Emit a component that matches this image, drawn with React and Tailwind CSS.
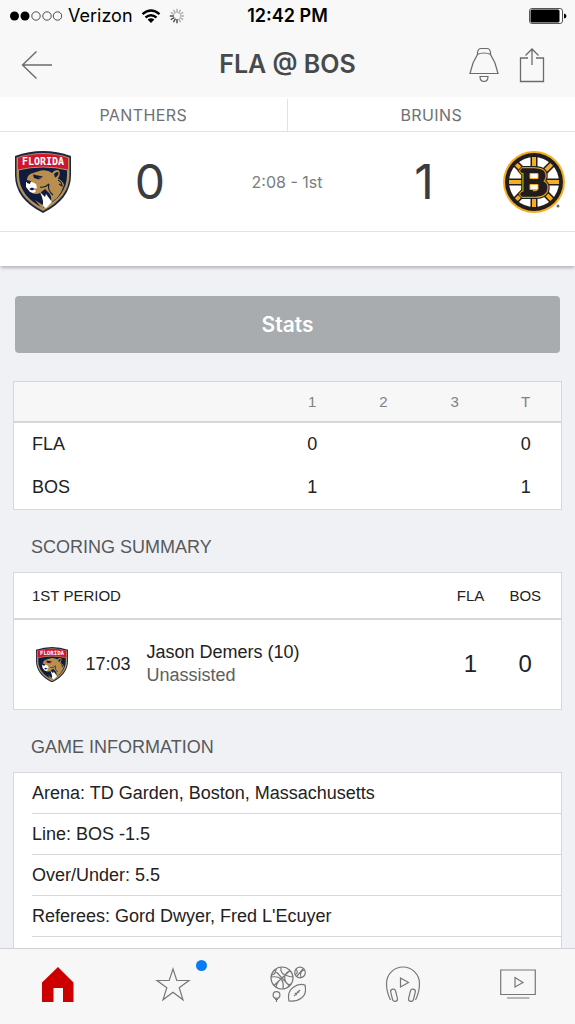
import React, { useState } from "react";

const LINE_SCORE = [
  { team: "FLA", periods: ["0", "", ""], total: "0" },
  { team: "BOS", periods: ["1", "", ""], total: "1" },
];

const GAME_INFO = [
  "Arena: TD Garden, Boston, Massachusetts",
  "Line: BOS -1.5",
  "Over/Under: 5.5",
  "Referees: Gord Dwyer, Fred L'Ecuyer",
];

const PanthersLogo = ({ className }) => (
  <svg viewBox="0 0 56 62" className={className} role="img" aria-label="Florida Panthers">
    <path d="M0 5Q14 0 28 0T56 5V24Q56 48 28 62Q0 48 0 24Z" fill="#1b2440" />
    <path d="M1.500 6.500Q15 2 28 2T54.500 6.500V24Q54.500 46 28 60Q1.500 46 1.500 24Z" fill="#b1935b" />
    <path d="M4 8Q16 4 28 4T52 8V24Q52 45 28 57Q4 45 4 24Z" fill="#101c3d" />
    <path d="M3 7Q15 3 28 3T53 7V19Q41 16 28 16T3 19Z" fill="#d0162f" />
    <path d="M3 19Q15 16 28 16T53 19" fill="none" stroke="#b1935b" strokeWidth="1.200" />
    <text x="28" y="13.500" textAnchor="middle" fontSize="10" fontWeight="700" fill="#fff" fontFamily="DejaVu Sans Mono, monospace">
      FLORIDA
    </text>
    {/* head and neck */}
    <path d="M12 28Q13 23 18 22L26 19.500Q33 18.500 37 22Q40 18 44 19.500Q46 23 43 27.500Q48 30 49 34Q47 41 42 47L36 51.500Q37 45 34 42L30 38L25 42Q21 44 17 42L12 37Z" fill="#b98f4d" />
    <path d="M39 23Q42 20 43.500 21.500Q43.500 25 40 26.500" fill="#101c3d" />
    <path d="M43 29Q47 31 47 35L44 33M25 36Q30 37 34 33Q32 39 38 44" fill="none" stroke="#101c3d" strokeWidth="1.100" />
    <path d="M18 23.500L28 25.500L24 28.500L19 27Z" fill="#101c3d" />
    <path d="M23 26.500L27 26L25 28Z" fill="#d0162f" />
    <path d="M11 31L17 31L21 33L22 37L19 38L21 40L19 42L15 41L11 36Z" fill="#fff" />
    <path d="M11 29L16 30L15 33L12 32Z" fill="#101c3d" />
    <path d="M14 38L17 36.500L20 38L17 39.500Z" fill="#101c3d" />
    <path d="M25 41L30 46L31 43L37 51L31 57L27 55Q30 52 25 41Z" fill="#fff" />
    <path d="M20 49L29 55L28 58.500Z" fill="#b98f4d" />
  </svg>
);

const BruinsLogo = ({ className }) => (
  <svg viewBox="0 0 62 62" className={className} role="img" aria-label="Boston Bruins">
    <circle cx="31" cy="31" r="31" fill="#f5ad22" />
    <circle cx="31" cy="31" r="29" fill="#211d1e" />
    <circle cx="31" cy="31" r="25" fill="#fff" />
    {[0, 45, 90, 135].map((angle) => (
      <g key={angle} transform={`rotate(${angle} 31 31)`}>
        <path d="M27.500 5.500H34.500V56.500H27.500Z" fill="#211d1e" />
        <path d="M29 6H33V56H29Z" fill="#f5ad22" />
      </g>
    ))}
    <g fontFamily="Liberation Serif, serif" fontSize="38" fontWeight="700" textAnchor="middle" strokeLinejoin="bevel">
      <text x="31" y="43.500" fill="#211d1e" stroke="#211d1e" strokeWidth="8">B</text>
      <text x="31" y="43.500" fill="#211d1e" stroke="#f5ad22" strokeWidth="5.500" aria-hidden="true">B</text>
      <text x="31" y="43.500" fill="#211d1e" stroke="#211d1e" strokeWidth="3.500" aria-hidden="true">B</text>
    </g>
    <path d="M27 22.500h8v5h-8zM27 33.500h8v5h-8z" fill="#fff" stroke="#f5ad22" strokeWidth="1" />
    <circle cx="55" cy="55" r="1.500" fill="#666" />
  </svg>
);

const StatusBar = () => (
  <div className="grid grid-cols-[1fr_auto_1fr] items-center h-8 pl-2 pr-2 text-lg text-black">
    <div className="flex items-center">
      <svg width="56" height="12" viewBox="0 0 56 12" aria-hidden="true">
        <circle cx="6.500" cy="6" r="4.500" />
        <circle cx="17" cy="6" r="4.500" />
        <g fill="none" stroke="#222" strokeWidth="0.800">
          <circle cx="28" cy="6" r="4.200" />
          <circle cx="39" cy="6" r="4.200" />
          <circle cx="49.500" cy="6" r="4.200" />
        </g>
      </svg>
      <span className="ml-1">Verizon</span>
      <svg width="20" height="15" viewBox="0 0 20 15" className="ml-2" fill="none" stroke="#000" strokeWidth="2.400" aria-hidden="true">
        <path d="M1.500 5.200Q10-2 18.500 5.200M4.500 8.500Q10 4 15.500 8.500" />
        <path d="M10 14L6.600 10.600Q10 8 13.400 10.600Z" fill="#000" stroke="none" />
      </svg>
      <svg width="16" height="16" viewBox="0 0 16 16" className="ml-2" strokeWidth="1.400" aria-hidden="true">
        {[0, 30, 60, 90, 120, 150, 180, 210, 240, 270, 300, 330].map((angle) => (
          <path
            key={angle}
            d="M8 0.800V5"
            stroke={angle >= 180 && angle < 300 ? "#444" : "#aaa"}
            transform={`rotate(${angle} 8 8)`}
          />
        ))}
      </svg>
    </div>
    <span className="font-semibold">12:42 PM</span>
    <svg width="38" height="16" viewBox="0 0 38 16" className="justify-self-end" aria-hidden="true">
      <rect x="0.500" y="0.500" width="33" height="15" rx="2.500" fill="#fff" stroke="#555" />
      <rect x="1.500" y="1.500" width="29" height="13" rx="1.500" />
      <path d="M35 5.500Q37.500 6 37.500 8T35 10.500Z" />
    </svg>
  </div>
);

const TitleBar = () => (
  <div className="grid grid-cols-[1fr_auto_1fr] items-center h-[65px] px-5 text-[#6b6b6d]">
    <button type="button" aria-label="Back" className="justify-self-start">
      <svg width="34" height="30" viewBox="0 0 34 30" fill="none" stroke="currentColor" strokeWidth="1.400">
        <path d="M32 15H2.500M16.500 1.500L2.500 15L16.500 28.500" />
      </svg>
    </button>
    <h1 className="text-[25px] font-semibold text-[#48494a]">FLA @ BOS</h1>
    <div className="flex items-center gap-5 justify-self-end pr-2.5">
      <button type="button" aria-label="Alerts">
        <svg width="30" height="36" viewBox="0 0 30 36" fill="none" stroke="currentColor" strokeWidth="1.200">
          <path d="M8.500 7.500V5.500Q9 1.500 12 1.500H18Q21 1.500 21.500 5.500V7.500" />
          <path d="M8.500 7.500Q11 6 15 6T21.500 7.500L26 16L29 26.500H1L4 16Z" />
          <path d="M11 29.500H19Q19 34.500 15 34.500T11 29.500Z" />
        </svg>
      </button>
      <button type="button" aria-label="Share">
        <svg width="26" height="36" viewBox="0 0 26 36" fill="none" stroke="currentColor" strokeWidth="1.300">
          <path d="M9 11H1.500V34.500H24.500V11H17M13 18V2M6.500 8.500L13 2L19.500 8.500" />
        </svg>
      </button>
    </div>
  </div>
);

const Scoreboard = () => (
  <section className="relative bg-white shadow-[0_3px_3px_-1px_rgba(0,0,0,0.25)]">
    <div className="grid grid-cols-2 h-[35px] pt-0.5 border-b border-[#e1e2e4] text-base tracking-wide text-[#6e7073]">
      <h2 className="flex items-center justify-center border-r border-[#e1e2e4]">PANTHERS</h2>
      <h2 className="flex items-center justify-center">BRUINS</h2>
    </div>
    <div className="flex items-center h-[100px] pl-[15px] pr-[10px] border-b border-[#e1e2e4]">
      <PanthersLogo className="w-14 shrink-0" />
      <span className="flex-1 text-center text-5xl text-[#3b3b40]">0</span>
      <span className="w-29 text-center text-base text-[#7b7d80]">2:08 - 1st</span>
      <span className="flex-1 text-center text-5xl text-[#3b3b40]">1</span>
      <BruinsLogo className="w-[62px] shrink-0" />
    </div>
    <div className="h-[34px]" />
  </section>
);

const LineScore = () => (
  <table className="w-full table-fixed bg-white border border-[#d5d7da] text-lg text-[#222]">
    <thead>
      <tr className="h-10 bg-[#f7f7f7] border-b-2 border-[#d5d7da] text-[15px] text-[#808285]">
        <td />
        {["1", "2", "3", "T"].map((label) => (
          <th key={label} scope="col" className="w-[13%] font-normal">{label}</th>
        ))}
      </tr>
    </thead>
    <tbody>
      {LINE_SCORE.map((row) => (
        <tr key={row.team} className="h-11">
          <th scope="row" className="pl-[18px] text-left font-normal">{row.team}</th>
          {row.periods.map((goals, i) => (
            <td key={i} className="text-center">{goals}</td>
          ))}
          <td className="text-center">{row.total}</td>
        </tr>
      ))}
    </tbody>
  </table>
);

const ScoringSummary = () => (
  <table className="w-full table-fixed bg-white border border-[#d5d7da] text-lg text-[#222]">
    <colgroup>
      <col className="w-18" />
      <col className="w-[61px]" />
      <col />
      <col className="w-[54px]" />
      <col className="w-16" />
    </colgroup>
    <thead>
      <tr className="h-[46px] border-b-2 border-[#d5d7da] text-[15px]">
        <th scope="col" colSpan={3} className="pl-[18px] text-left font-normal">1ST PERIOD</th>
        <th scope="col" className="font-normal">FLA</th>
        <th scope="col" className="pr-2 font-normal">BOS</th>
      </tr>
    </thead>
    <tbody>
      <tr className="h-[91px]">
        <td>
          <PanthersLogo className="w-8 ml-[22px]" />
        </td>
        <td>17:03</td>
        <td className="leading-[23px]">
          <p>Jason Demers (10)</p>
          <p className="text-[#5c5e61]">Unassisted</p>
        </td>
        <td className="text-center text-2xl">1</td>
        <td className="pr-2 text-center text-2xl">0</td>
      </tr>
    </tbody>
  </table>
);

const TABS = [
  {
    name: "Home",
    icon: <path d="M2 36V16.500L18 1L33.500 16.500V36H23V22H13.500V36Z" fill="#cc0000" stroke="none" />,
  },
  {
    name: "Favorites",
    dot: true,
    icon: <path d="M18 3L21.800 14.500H34L24.200 21.700L28 33.800L18 26.300L8 33.800L11.800 21.700L2 14.500H14.200Z" />,
  },
  {
    name: "Sports",
    icon: (
      <>
        <circle cx="12" cy="12" r="11" />
        <path d="M4.500 4L19.500 20M4 19.500L20 4.500M11 1Q10 7 15 9T23 11M1 11Q8 10 11 13T13 23M6 3Q6 8 2 9M6 21Q7 16 11 13M20 4.500Q13 8 15 14T21 18" />
        <circle cx="30" cy="6.500" r="5.300" />
        <path d="M26 3Q29 7 25 8.500M34.500 4Q29 5 31 11.500M27 10L33 3" />
        <circle cx="6.500" cy="29" r="3.400" />
        <path d="M6.500 32.500V36M5 33.500H8M19 35Q17 26 23 21.500T35 19Q37 28 31.500 32T19 35ZM24 30L30 24M25 27L27 29M27.500 25L29 27" />
      </>
    ),
  },
  {
    name: "Listen",
    icon: (
      <>
        <path d="M5.500 34Q1.500 26 1.500 17.500A16.500 16.500 0 0 1 34.500 17.500Q34.500 26 30.500 34" />
        <rect x="6.500" y="23" width="5" height="12.500" rx="2.500" transform="rotate(-14 9 29)" />
        <rect x="24.500" y="23" width="5" height="12.500" rx="2.500" transform="rotate(14 27 29)" />
        <path d="M15.500 12L23.500 16.500L15.500 21Z" />
      </>
    ),
  },
  {
    name: "Watch",
    icon: <path d="M0.700 4H35.300V28.500H0.700ZM7 32H29.500M15 11.500L23 16.500L15 21Z" />,
  },
];

const TabBar = ({ active, onSelect }) => (
  <nav className="grid grid-cols-5 h-19 pb-1 border-t border-[#d0d1d3] bg-[#f7f7f7]">
    {TABS.map((tab) => (
      <button
        key={tab.name}
        type="button"
        aria-label={tab.name}
        aria-current={active === tab.name ? "page" : undefined}
        onClick={() => onSelect(tab.name)}
        className="flex items-center justify-center"
      >
        <span className="relative">
          <svg width="36" height="37" viewBox="0 0 36 37" fill="none" stroke="#77787a" strokeWidth="1.200">
            {tab.icon}
          </svg>
          {tab.dot && <span className="absolute -top-1.5 -right-4 w-[11px] h-[11px] rounded-full bg-[#087cf7]" />}
        </span>
      </button>
    ))}
  </nav>
);

const App = () => {
  const [tab, setTab] = useState("Home");

  return (
    <div className="flex flex-col h-screen bg-[#f0f1f4] font-[Inter,sans-serif]">
      <header className="bg-[#f8f8f8]">
        <StatusBar />
        <TitleBar />
      </header>
      <Scoreboard />

      <main className="flex-1 min-h-0 overflow-y-auto [scrollbar-width:none] px-[13px] pt-[30px] font-['Liberation_Sans',sans-serif]">
        <div className="px-0.5">
          <button type="button" className="w-full h-[57px] rounded bg-[#a8acaf] text-[21px] font-semibold text-white font-[Inter,sans-serif]">
            Stats
          </button>
        </div>

        <div className="mt-7">
          <LineScore />
        </div>

        <h2 className="mt-6 mb-3 px-[18px] text-lg leading-[26px] text-[#57595c]">SCORING SUMMARY</h2>
        <ScoringSummary />

        <h2 className="mt-6 mb-3 px-[18px] text-lg leading-[26px] text-[#57595c]">GAME INFORMATION</h2>
        <ul className="pl-[18px] pb-8 bg-white border border-[#d5d7da] text-lg text-[#222]">
          {GAME_INFO.map((line) => (
            <li key={line} className="flex items-center h-[41px] border-b border-[#d5d7da]">{line}</li>
          ))}
        </ul>
      </main>

      <TabBar active={tab} onSelect={setTab} />
    </div>
  );
};

export default App;
